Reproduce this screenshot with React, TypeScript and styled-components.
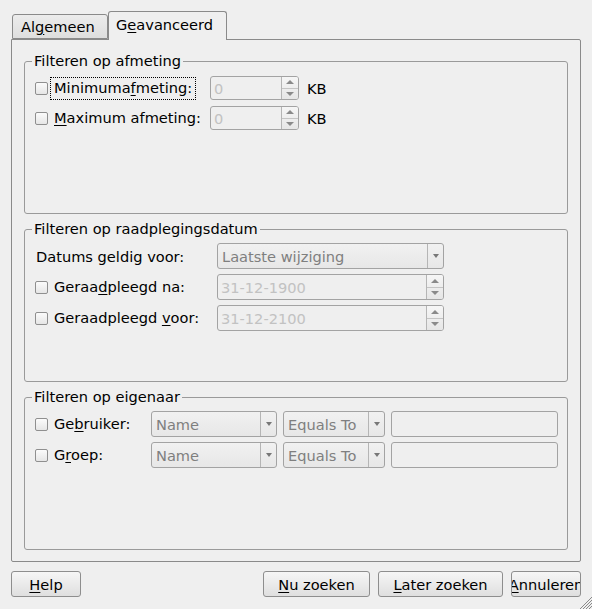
import React from "react";
import styled, { createGlobalStyle } from "styled-components";

const Global = createGlobalStyle`
  html, body { margin: 0; padding: 0; background: #efefef; }
  body { font-family: "DejaVu Sans", "Liberation Sans", sans-serif; font-size: 14.6px; color: #000; }
  * { box-sizing: border-box; }
`;

const Window = styled.div`
  position: relative;
  width: 592px;
  height: 609px;
  padding: 11px 11px 0 11px;
  display: flex;
  flex-direction: column;
  background: #efefef;
  overflow: hidden;
`;

const TabBar = styled.div`
  display: flex;
  align-items: flex-end;
  height: 28px;
  padding-left: 1px;
`;

const Tab = styled.div<{ $active?: boolean }>`
  position: relative;
  z-index: ${(p) => (p.$active ? 2 : 1)};
  height: ${(p) => (p.$active ? "29px" : "25px")};
  margin-bottom: ${(p) => (p.$active ? "-1px" : "0")};
  padding: ${(p) => (p.$active ? "0 0 3px 7px" : "0 0 0 8px")};
  border: 1px solid #8a8a8a;
  border-bottom: ${(p) => (p.$active ? "none" : "1px solid #8a8a8a")};
  border-radius: 3px 3px 0 0;
  background: ${(p) => (p.$active ? "#efefef" : "linear-gradient(#ececec, #dedede)")};
  display: flex;
  align-items: center;
  white-space: nowrap;
  width: ${(p) => (p.$active ? "119px" : "96px")};
`;

const U = styled.span`
  text-decoration: underline;
  text-underline-offset: 2px;
`;

const Panel = styled.div`
  height: 523px;
  border: 1px solid #8a8a8a;
  border-radius: 0 2px 2px 2px;
  padding: 21px 12px 11px 12px;
  display: flex;
  flex-direction: column;
  gap: 15px;
`;

const Frame = styled.div`
  height: 153px;
  border: 1px solid #9a9a9a;
  border-radius: 3px;
  padding: 0 10px;
  display: flex;
  flex-direction: column;
`;

const FrameTitle = styled.div<{ $after: number }>`
  align-self: flex-start;
  height: 18px;
  line-height: 18px;
  margin: -10px 0 ${(p) => p.$after}px -3px;
  padding: 0 2px;
  background: #efefef;
  white-space: nowrap;
`;

const Rows = styled.div<{ $gap: number }>`
  display: flex;
  flex-direction: column;
  gap: ${(p) => p.$gap}px;
`;

const Row = styled.div<{ $h: number }>`
  display: flex;
  align-items: center;
  height: ${(p) => p.$h}px;
`;

const LabelCell = styled.div<{ $w: number }>`
  width: ${(p) => p.$w}px;
  flex: none;
  display: flex;
  align-items: center;
  white-space: nowrap;
`;

const Check = styled.span`
  width: 13px;
  height: 13px;
  flex: none;
  border: 1px solid #8f8f8f;
  border-radius: 2px;
  background: linear-gradient(#fbfbfb, #e6e6e6);
  margin-right: 2px;
`;

const CheckLabel = styled.span<{ $focus?: boolean }>`
  padding: 1px 3px 2px 3px;
  border: 1px dotted ${(p) => (p.$focus ? "#000" : "transparent")};
  line-height: 18px;
`;

const PlainLabel = styled.span`
  padding-left: 1px;
`;

const Field = styled.div<{ $w: number; $h: number }>`
  width: ${(p) => p.$w}px;
  height: ${(p) => p.$h}px;
  flex: none;
  border: 1px solid #a3a3a3;
  border-radius: 3px;
  background: #efefef;
  display: flex;
  overflow: hidden;
`;

const FieldText = styled.div<{ $color: string }>`
  flex: 1;
  display: flex;
  align-items: center;
  padding-left: 3px;
  color: ${(p) => p.$color};
  white-space: nowrap;
  overflow: hidden;
`;

const SpinCol = styled.div`
  width: 17px;
  flex: none;
  border-left: 1px solid #b5b5b5;
  display: flex;
  flex-direction: column;
  background: linear-gradient(#f6f6f6, #e6e6e6);
`;

const SpinHalf = styled.div<{ $top?: boolean }>`
  flex: 1;
  display: flex;
  align-items: center;
  justify-content: center;
  border-bottom: ${(p) => (p.$top ? "1px solid #c4c4c4" : "none")};
`;

const Arrow = styled.span<{ $up?: boolean }>`
  width: 0;
  height: 0;
  border-left: 4px solid transparent;
  border-right: 4px solid transparent;
  ${(p) =>
    p.$up ? "border-bottom: 4px solid #8a8a8a;" : "border-top: 4px solid #8a8a8a;"}
`;

const Combo = styled.div<{ $w: number }>`
  width: ${(p) => p.$w}px;
  height: 26px;
  flex: none;
  border: 1px solid #a3a3a3;
  border-radius: 3px;
  background: linear-gradient(#f1f1f1, #e7e7e7);
  display: flex;
  overflow: hidden;
`;

const ComboText = styled.div`
  flex: 1;
  display: flex;
  align-items: center;
  padding-left: 4px;
  color: #7f7f7f;
  white-space: nowrap;
  overflow: hidden;
`;

const ComboArrow = styled.div`
  width: 16px;
  flex: none;
  border-left: 1px solid #b5b5b5;
  display: flex;
  align-items: center;
  justify-content: center;
  & > span {
    border-left: 3.5px solid transparent;
    border-right: 3.5px solid transparent;
    border-top: 4px solid #777;
  }
`;

const Unit = styled.span`
  margin-left: 8px;
`;

const Gap = styled.div<{ $w: number }>`
  width: ${(p) => p.$w}px;
  flex: none;
`;

const ButtonBar = styled.div`
  margin-top: 9px;
  display: flex;
  height: 26px;
`;

const Button = styled.div<{ $w: number }>`
  width: ${(p) => p.$w}px;
  height: 26px;
  flex: none;
  border: 1px solid #8e8e8e;
  border-radius: 3px;
  background: linear-gradient(#f6f6f6, #dfdfdf);
  display: flex;
  align-items: center;
  justify-content: center;
  overflow: hidden;
  white-space: nowrap;
  & > span.t { flex: none; }
`;

const Spacer = styled.div`
  flex: 1;
`;

const Grip = styled.svg`
  position: absolute;
  right: 0;
  bottom: 0;
`;

const Spin = ({ w, h, value, color }: { w: number; h: number; value: string; color: string }) => (
  <Field $w={w} $h={h}>
    <FieldText $color={color}>{value}</FieldText>
    <SpinCol>
      <SpinHalf $top>
        <Arrow $up />
      </SpinHalf>
      <SpinHalf>
        <Arrow />
      </SpinHalf>
    </SpinCol>
  </Field>
);

const Drop = ({ w, value }: { w: number; value: string }) => (
  <Combo $w={w}>
    <ComboText>{value}</ComboText>
    <ComboArrow>
      <span />
    </ComboArrow>
  </Combo>
);

export default function App() {
  return (
    <>
      <Global />
      <Window>
        <TabBar>
          <Tab>
            Al<U>g</U>emeen
          </Tab>
          <Tab $active>
            G<U>e</U>avanceerd
          </Tab>
        </TabBar>
        <Panel>
          <Frame>
            <FrameTitle $after={6}>Filteren op afmeting</FrameTitle>
            <Rows $gap={6}>
              <Row $h={24}>
                <LabelCell $w={175}>
                  <Check />
                  <CheckLabel $focus>
                    Minimuma<U>f</U>meting:
                  </CheckLabel>
                </LabelCell>
                <Spin w={89} h={24} value="0" color="#c2c2c2" />
                <Unit>KB</Unit>
              </Row>
              <Row $h={24}>
                <LabelCell $w={175}>
                  <Check />
                  <CheckLabel>
                    <U>M</U>aximum afmeting:
                  </CheckLabel>
                </LabelCell>
                <Spin w={89} h={24} value="0" color="#c2c2c2" />
                <Unit>KB</Unit>
              </Row>
            </Rows>
          </Frame>
          <Frame>
            <FrameTitle $after={5}>Filteren op raadplegingsdatum</FrameTitle>
            <Rows $gap={5}>
              <Row $h={26}>
                <LabelCell $w={182}>
                  <PlainLabel>Datums geldig voor:</PlainLabel>
                </LabelCell>
                <Drop w={227} value="Laatste wijziging" />
              </Row>
              <Row $h={26}>
                <LabelCell $w={182}>
                  <Check />
                  <CheckLabel>
                    Geraa<U>d</U>pleegd na:
                  </CheckLabel>
                </LabelCell>
                <Spin w={227} h={26} value="31-12-1900" color="#c2c2c2" />
              </Row>
              <Row $h={26}>
                <LabelCell $w={182}>
                  <Check />
                  <CheckLabel>
                    Geraadpleegd <U>v</U>oor:
                  </CheckLabel>
                </LabelCell>
                <Spin w={227} h={26} value="31-12-2100" color="#c2c2c2" />
              </Row>
            </Rows>
          </Frame>
          <Frame>
            <FrameTitle $after={5}>Filteren op eigenaar</FrameTitle>
            <Rows $gap={5}>
              <Row $h={26}>
                <LabelCell $w={116}>
                  <Check />
                  <CheckLabel>
                    Ge<U>b</U>ruiker:
                  </CheckLabel>
                </LabelCell>
                <Drop w={126} value="Name" />
                <Gap $w={6} />
                <Drop w={102} value="Equals To" />
                <Gap $w={6} />
                <Field $w={167} $h={26} />
              </Row>
              <Row $h={26}>
                <LabelCell $w={116}>
                  <Check />
                  <CheckLabel>
                    G<U>r</U>oep:
                  </CheckLabel>
                </LabelCell>
                <Drop w={126} value="Name" />
                <Gap $w={6} />
                <Drop w={102} value="Equals To" />
                <Gap $w={6} />
                <Field $w={167} $h={26} />
              </Row>
            </Rows>
          </Frame>
        </Panel>
        <ButtonBar>
          <Button $w={70}>
            <span className="t">
              <U>H</U>elp
            </span>
          </Button>
          <Spacer />
          <Button $w={107}>
            <span className="t">
              <U>N</U>u zoeken
            </span>
          </Button>
          <Gap $w={8} />
          <Button $w={125}>
            <span className="t">
              <U>L</U>ater zoeken
            </span>
          </Button>
          <Gap $w={8} />
          <Button $w={70}>
            <span className="t">
              <U>A</U>nnuleren
            </span>
          </Button>
        </ButtonBar>
        <Grip width="13" height="13" viewBox="0 0 13 13">
          <g stroke="#8a8a8a" strokeWidth="1">
            <line x1="13" y1="1" x2="1" y2="13" />
            <line x1="13" y1="4" x2="4" y2="13" />
            <line x1="13" y1="7" x2="7" y2="13" />
            <line x1="13" y1="10" x2="10" y2="13" />
          </g>
        </Grip>
      </Window>
    </>
  );
}
